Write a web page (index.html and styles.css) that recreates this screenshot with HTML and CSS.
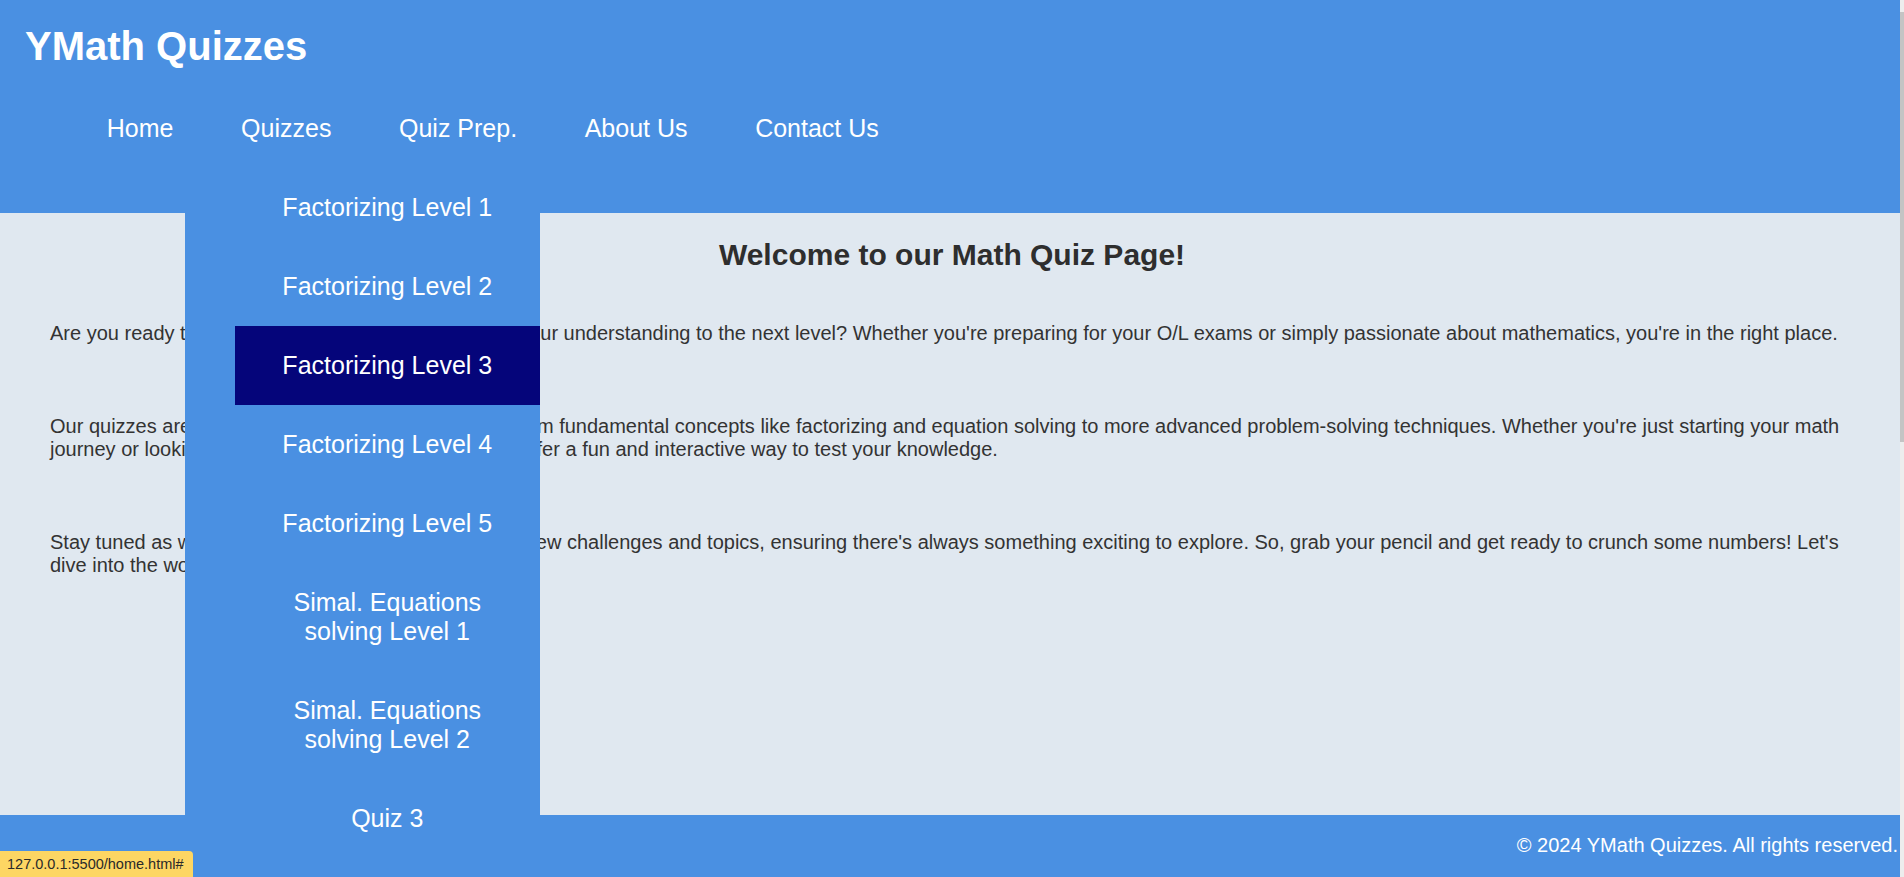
FILE: index.html
```html
<!DOCTYPE html>
<html lang="en">
<head>
<meta charset="utf-8">
<title>YMath Quizzes</title>
<link rel="stylesheet" href="styles.css">
</head>
<body>
<header class="site-header">
  <h1 class="brand">YMath Quizzes</h1>
  <nav class="main-nav">
    <ul class="nav-list">
      <li class="nav-item"><a class="nav-link" href="#">Home</a></li>
      <li class="nav-item has-dropdown">
        <a class="nav-link" href="#">Quizzes</a>
        <ul class="dropdown">
          <li><a class="dropdown-link" href="#">Factorizing Level 1</a></li>
          <li><a class="dropdown-link" href="#">Factorizing Level 2</a></li>
          <li><a class="dropdown-link is-active" href="#">Factorizing Level 3</a></li>
          <li><a class="dropdown-link" href="#">Factorizing Level 4</a></li>
          <li><a class="dropdown-link" href="#">Factorizing Level 5</a></li>
          <li><a class="dropdown-link" href="#">Simal. Equations solving Level 1</a></li>
          <li><a class="dropdown-link" href="#">Simal. Equations solving Level 2</a></li>
          <li><a class="dropdown-link" href="#">Quiz 3</a></li>
        </ul>
      </li>
      <li class="nav-item"><a class="nav-link" href="#">Quiz Prep.</a></li>
      <li class="nav-item"><a class="nav-link" href="#">About Us</a></li>
      <li class="nav-item"><a class="nav-link" href="#">Contact Us</a></li>
    </ul>
  </nav>
</header>
<main class="content">
  <h2 class="content-title">Welcome to our Math Quiz Page!</h2>
  <p class="content-text">Are you ready to challenge your math skills and take your understanding to the next level? Whether you're preparing for your O/L exams or simply passionate about mathematics, you're in the right place.</p>
  <p class="content-text">Our quizzes are designed to cover a range of topics from fundamental concepts like factorizing and equation solving to more advanced problem-solving techniques. Whether you're just starting your math journey or looking to sharpen your skills, our quizzes offer a fun and interactive way to test your knowledge.</p>
  <p class="content-text">Stay tuned as we continually update our quizzes with new challenges and topics, ensuring there's always something exciting to explore. So, grab your pencil and get ready to crunch some numbers! Let's dive into the world of math together!</p>
</main>
<footer class="site-footer">
  <p class="footer-text">&copy; 2024 YMath Quizzes. All rights reserved.</p>
</footer>
<div class="status-bubble">127.0.0.1:5500/home.html#</div>
<div class="scrollbar"><div class="scrollbar-thumb"></div></div>
</body>
</html>
```
FILE: styles.css
```css
* {
  box-sizing: border-box;
}

html, body {
  margin: 0;
  padding: 0;
  overflow: hidden;
}

body {
  font-family: "Liberation Sans", Arial, sans-serif;
  font-size: 20px;
  color: #333;
  background: #e0e8f0;
}

.site-header {
  background: #4a90e2;
  color: #fff;
  padding: 23px 25px 45px;
}

.brand {
  margin: 0 0 20px;
  font-size: 40px;
  font-weight: bold;
  line-height: 46px;
}

.nav-list {
  display: flex;
  list-style: none;
  margin: 0;
  padding: 0 0 0 48px;
}

.nav-item {
  position: relative;
}

.nav-link {
  display: block;
  padding: 25px 33.8px;
  font-size: 25px;
  color: #fff;
  text-decoration: none;
}

.dropdown {
  position: absolute;
  top: 100%;
  left: -22.5px;
  width: 355px;
  margin: 0;
  padding: 0 0 0 50px;
  list-style: none;
  background: #4a90e2;
  z-index: 10;
}

.dropdown-link {
  display: block;
  padding: 25px 20px;
  font-size: 25px;
  text-align: center;
  color: #fff;
  text-decoration: none;
}

.dropdown-link.is-active {
  background: #05057a;
}

.content {
  min-height: 602px;
  padding: 25px 50px 0;
}

.content-title {
  margin: 0 0 50px;
  font-size: 30px;
  font-weight: bold;
  text-align: center;
  color: #2e2e2e;
}

.content-text {
  margin: 0 0 70px;
  line-height: 23px;
}

.site-footer {
  background: #4a90e2;
  color: #fff;
  text-align: right;
  padding: 19px 6px 30px 0;
}

.footer-text {
  margin: 0;
  line-height: 23px;
}

.status-bubble {
  position: fixed;
  left: 0;
  bottom: 0;
  height: 26px;
  padding: 0 9px 0 7px;
  background: #fdd663;
  color: #2a2a2a;
  font-size: 14.5px;
  line-height: 26px;
  border-top-right-radius: 4px;
  z-index: 20;
}

.scrollbar {
  position: fixed;
  top: 0;
  right: 0;
  width: 4px;
  height: 100%;
  background: #ededed;
  z-index: 30;
}

.scrollbar-thumb {
  margin-top: 12px;
  height: 430px;
  background: #c4c4c4;
}
```
